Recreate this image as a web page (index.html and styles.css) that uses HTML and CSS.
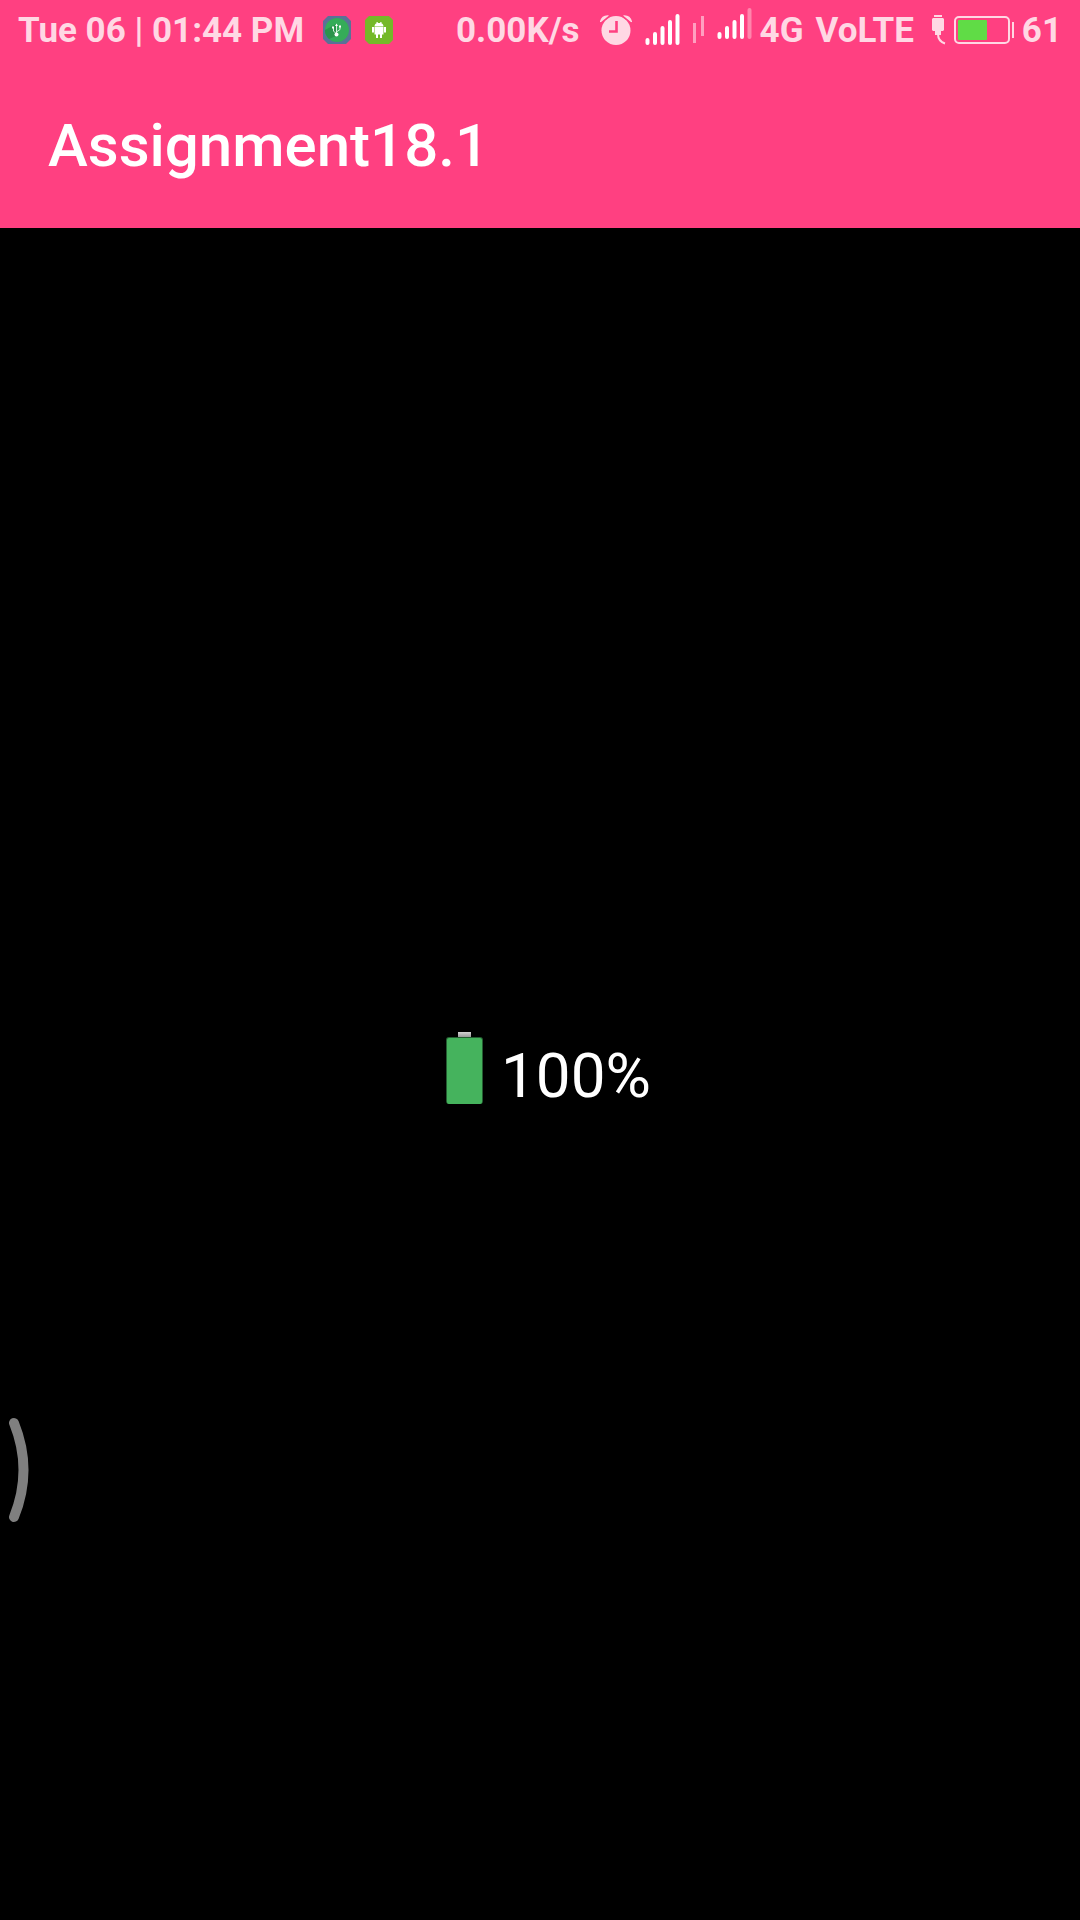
FILE: index.html
```
<!DOCTYPE html>
<html lang="en">
<head>
<meta charset="utf-8">
<meta name="viewport" content="width=device-width, initial-scale=1">
<title>Assignment18.1</title>
<link rel="stylesheet" href="styles.css">
</head>
<body>
<header class="header">
  <div class="status">
    <span class="clock">Tue 06 | 01:44 PM</span>
    <div class="notices">
      <svg width="28" height="28" viewBox="0 0 28 28" role="img" aria-label="USB connected">
        <path fill="#5a7197" d="M5 0h18l5 5v18l-5 5H5l-5-5V5z"/>
        <circle cx="14" cy="14" r="12" fill="#35ac58"/>
        <path fill="#2c934b" d="M2 14 13 8v12L6 23A12 12 0 0 1 2 14z"/>
        <path fill="none" stroke="#d5eedd" stroke-width="1" d="M13.500 8v11M13.500 18l-3-3v-3M13.500 16l3.500-2.500V10"/>
        <path fill="#fff" d="M12 10l1.500-2.500L15 10zM9 10.500h2v2H9zM16 9.500h2v2h-2z"/>
        <circle cx="13.500" cy="18.500" r="2" fill="#fff"/>
      </svg>
      <svg width="28" height="28" viewBox="0 0 28 28" role="img" aria-label="Android debugging">
        <path fill="#74b929" d="M4 0h20l4 4v20l-4 4H4l-4-4V4z"/>
        <path fill="#fff" d="M9.500 10.500C9.500 8.500 10.500 7.500 12 7L11 6h1.500l.5 1h2l.5-1H17l-1 1c1.500.5 2.500 1.500 2.500 3.500zM9.500 11h9v7.500H17V22h-2v-3.500h-2V22h-2v-3.500H9.500zM7 11h2v5.500H7zM19 11h2v5.500h-2z"/>
      </svg>
    </div>
    <div class="indicators">
      <span>0.00K/s</span>
      <svg class="alarm" width="32" height="30" viewBox="0 0 32 30" role="img" aria-label="Alarm">
        <circle cx="16" cy="15.500" r="14.500" fill="#ffd8e4"/>
        <path fill="none" stroke="#ff4081" stroke-width="2.600" d="M16.500 6v10.500H9"/>
        <path fill="#ffd8e4" stroke="#ff4081" stroke-width="1.500" d="M-1 7.500C0 1 4-1 9-.5L9.500 1 1 8zM33 7.500C32 1 28-1 23-.5L22.500 1 31 8z"/>
      </svg>
      <svg class="signal" width="35" height="32" viewBox="0 0 35 32" role="img" aria-label="Signal full">
        <path fill="none" stroke="#fff" stroke-width="4" stroke-linecap="round" d="M2.500 26v3M10 20v9M17.500 14v15M25 8v21M32.500 2v27"/>
      </svg>
      <svg class="traffic" width="12" height="28" viewBox="0 0 12 28" role="img" aria-label="Data activity">
        <path fill="#ff9fc0" d="M0 7h3v20H0zM8 0h3v20H8z"/>
      </svg>
      <svg class="signal-two" width="35" height="32" viewBox="0 0 35 32" role="img" aria-label="Signal strong">
        <path fill="none" stroke="#fff" stroke-width="4" stroke-linecap="round" d="M2.500 26v3M10 20v9M17.500 14v15M25 8v21"/>
        <path fill="none" stroke="#ff85ac" stroke-width="4" stroke-linecap="round" d="M32.500 2v27"/>
      </svg>
      <span class="network">4G</span>
      <span class="network">VoLTE</span>
      <svg class="plug" width="14" height="30" viewBox="0 0 14 30" role="img" aria-label="Charging">
        <path fill="#ffd8e4" d="M2 0h8v2H2zM1 3h10l1 1v11l-1 1H9v4H3v-4H1l-1-1V4z"/>
        <path fill="none" stroke="#ffd8e4" stroke-width="2" d="M6 19c0 5 2.500 8 7 9.500"/>
      </svg>
      <svg class="cell" width="60" height="28" viewBox="0 0 60 28" aria-hidden="true">
        <rect x="1" y="1" width="54" height="26" rx="4" fill="none" stroke="#ffd8e4" stroke-width="2"/>
        <rect x="4" y="4" width="29" height="20" rx="1" fill="#60dc46"/>
        <path fill="#ffd8e4" d="M58 6h2v16h-2z"/>
      </svg>
      <span>61</span>
    </div>
  </div>
  <h1 class="title">Assignment18.1</h1>
</header>
<main class="content">
  <div class="level">
    <svg width="72" height="72" viewBox="0 0 72 72" aria-hidden="true">
      <defs>
        <linearGradient id="cap" x2="0" y2="1"><stop offset="0" stop-color="#d4d4d4"/><stop offset="1" stop-color="#8f8f8f"/></linearGradient>
      </defs>
      <path fill="url(#cap)" d="M29 0h13v6H29z"/>
      <rect x="17" y="5" width="37" height="67" rx="3" fill="#245d31"/>
      <rect x="18" y="6" width="35" height="66" rx="2" fill="#45b35d"/>
    </svg>
    <span class="percent">100%</span>
  </div>
</main>
<svg class="edge-handle" width="32" height="112" viewBox="0 0 32 112" aria-hidden="true">
  <path fill="none" stroke="#7f7f7f" stroke-width="10" stroke-linecap="round" d="M14 9Q33 56 14 103"/>
</svg>
</body>
</html>
```
FILE: styles.css
```
* {
  box-sizing: border-box;
}

body {
  display: flex;
  flex-direction: column;
  min-height: 100vh;
  margin: 0;
  background: #000;
  color: #fff;
  font-family: Roboto, "Noto Sans", sans-serif;
}

svg {
  display: block;
  flex: none;
}

.header {
  background: #ff4081;
}

.status {
  display: flex;
  align-items: center;
  height: 60px;
  padding: 0 18px;
  color: #ffd8e4;
  font-size: 35px;
  font-weight: 700;
  line-height: 60px;
  white-space: nowrap;
}

.status span {
  padding-top: 2px;
}

.notices {
  display: flex;
  gap: 14px;
  margin-left: 19px;
}

.indicators {
  display: flex;
  align-items: center;
  margin-left: auto;
}

.alarm {
  margin-left: 20px;
}

.signal {
  margin-left: 13px;
}

.traffic {
  margin-left: 13px;
}

.signal-two {
  margin-left: 12px;
  margin-bottom: 12px;
}

.network {
  margin-left: 8px;
}

.network + .network {
  margin-left: 12px;
}

.plug {
  margin-left: 18px;
}

.cell {
  margin: 0 8px;
}

.title {
  height: 168px;
  margin: 0;
  padding: 4px 48px 0;
  font-size: 60px;
  font-weight: 500;
  line-height: 164px;
}

.content {
  display: flex;
  flex: 1;
  align-items: center;
  justify-content: center;
}

.level {
  display: flex;
  align-items: flex-start;
}

.percent {
  padding-top: 4px;
  font-size: 62px;
  line-height: 82px;
}

.level svg {
  margin-top: 1px;
}

.edge-handle {
  position: fixed;
  bottom: 394px;
  left: 0;
}
```
